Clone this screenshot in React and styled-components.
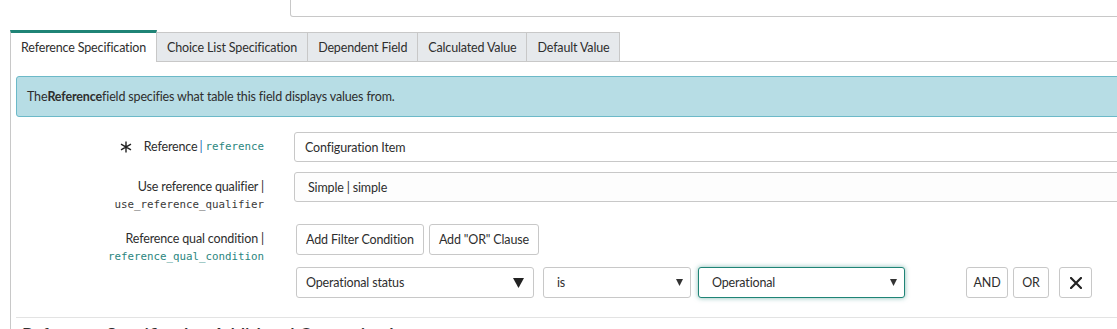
import React from 'react';
import styled, { createGlobalStyle } from 'styled-components';

const GlobalStyle = createGlobalStyle`
  html, body { margin: 0; padding: 0; background: #fff; overflow: hidden; }
  body {
    font-family: Lato, "Open Sans", "Liberation Sans", sans-serif;
    font-size: 12.5px;
    letter-spacing: -0.15px;
    color: #2e2e2e;
  }
  * { box-sizing: border-box; }
`;

const Page = styled.div`
  width: 1140px;
  height: 329px;
  overflow: hidden;
`;

const TopField = styled.div`
  margin-left: 290px;
  height: 17px;
  border: 1px solid #c8c8c8;
  border-top: none;
  border-radius: 0 0 0 3px;
`;

const TabStrip = styled.div`
  display: flex;
  align-items: flex-end;
  margin: 13px 0 0 10px;
  height: 32px;
  border-bottom: 1px solid #c8c8c8;
`;

const Tab = styled.div`
  height: ${p => (p.$active ? 32 : 29)}px;
  margin-bottom: ${p => (p.$active ? -1 : 0)}px;
  padding: 0 ${p => p.$pad}px;
  display: flex;
  align-items: center;
  background: ${p => (p.$active ? '#fff' : '#e6e9ec')};
  border-top: ${p => (p.$active ? '3px solid #1f8476' : '1px solid #c8c8c8')};
  border-left: ${p => (p.$active ? '1px solid #c8c8c8' : 'none')};
  border-right: 1px solid #c8c8c8;
  white-space: nowrap;
  color: #2e2e2e;
`;

const Panel = styled.div`
  margin-left: 10px;
  border-left: 1px solid #c8c8c8;
  padding: 14px 0 0 5px;
  height: 300px;
`;

const InfoBox = styled.div`
  height: 41px;
  border: 1px solid #6cb9c8;
  background: #b7dde5;
  border-radius: 3px;
  padding: 0 10px;
  display: flex;
  align-items: center;
`;

const Strong = styled.span`
  font-weight: 700;
`;

const Form = styled.div`
  margin-top: 15px;
  display: flex;
  flex-direction: column;
  gap: 10px;
`;

const Row = styled.div`
  display: grid;
  grid-template-columns: 248px 1fr;
  column-gap: 30px;
`;

const Label = styled.div`
  text-align: right;
  padding-top: 6px;
  color: #2e2e2e;
`;

const LabelLine = styled.div`
  height: 18px;
  line-height: 18px;
  white-space: nowrap;
  display: flex;
  justify-content: flex-end;
  align-items: center;
`;

const Star = styled.svg`
  margin-right: 12px;
  flex: none;
`;

const Pipe = styled.span`
  color: ${p => p.$color || 'inherit'};
  margin: 0 3px 0 2px;
`;

const Mono = styled.span`
  font-family: "DejaVu Sans Mono", "Liberation Mono", monospace;
  font-size: 10.8px;
  letter-spacing: 0;
  color: ${p => (p.$teal ? '#2b8680' : '#3a3a3a')};
`;

const Input = styled.div`
  height: 30px;
  border: 1px solid #c8c8c8;
  border-radius: 3px;
  padding: 0 ${p => p.$pad}px;
  display: flex;
  align-items: center;
  background: ${p => p.$bg || '#fff'};
  white-space: nowrap;
`;

const Controls = styled.div`
  display: flex;
  flex-direction: column;
  gap: 12px;
  padding-left: 2px;
`;

const ButtonRow = styled.div`
  display: flex;
  gap: 5px;
`;

const Button = styled.button`
  height: 31px;
  ${p => (p.$w ? `width: ${p.$w}px; padding: 0;` : 'padding: 0 9px;')}
  margin-left: ${p => p.$ml || 0}px;
  border: 1px solid #c8c8c8;
  border-radius: 3px;
  background: #fff;
  font-family: inherit;
  font-size: inherit;
  letter-spacing: inherit;
  color: #2e2e2e;
  display: flex;
  align-items: center;
  justify-content: center;
  white-space: nowrap;
  flex: none;
`;

const CondRow = styled.div`
  display: flex;
  align-items: center;
  height: 31px;
`;

const Select = styled.div`
  width: ${p => p.$w}px;
  margin-left: ${p => p.$ml || 0}px;
  height: 31px;
  border: 1px solid ${p => (p.$focus ? '#1f8476' : '#c8c8c8')};
  box-shadow: ${p => (p.$focus ? '0 0 5px rgba(31,132,118,0.55)' : 'none')};
  border-radius: 3px;
  padding: 0 ${p => p.$pr}px 0 ${p => p.$pl}px;
  display: flex;
  align-items: center;
  justify-content: space-between;
  background: #fff;
  flex: none;
`;

const Separator = styled.div`
  margin-top: 19px;
  height: 1px;
  background: #e3e3e3;
`;

const Heading = styled.div`
  padding: 5px 0 0 6px;
  font-size: 18px;
  line-height: 22px;
  font-weight: 600;
  letter-spacing: 0;
  color: #2e2e2e;
  white-space: nowrap;
`;

const AsteriskIcon = () => (
  <Star width="12" height="12" viewBox="0 0 12 12">
    <path d="M6 0.5 V11.5 M1 3.2 L11 8.8 M11 3.2 L1 8.8" stroke="#222" strokeWidth="1.4" />
  </Star>
);

const BigArrow = () => (
  <svg width="11" height="10" viewBox="0 0 11 10">
    <polygon points="0,0 11,0 5.5,10" fill="#222" />
  </svg>
);

const SmallArrow = () => (
  <svg width="7" height="7" viewBox="0 0 7 7">
    <polygon points="0,0 7,0 3.5,7" fill="#333" />
  </svg>
);

const CloseIcon = () => (
  <svg width="12" height="12" viewBox="0 0 12 12">
    <path d="M1 1 L11 11 M11 1 L1 11" stroke="#222" strokeWidth="2.2" strokeLinecap="square" />
  </svg>
);

export default function App() {
  return (
    <Page>
      <GlobalStyle />
      <TopField />
      <TabStrip>
        <Tab $active $pad={10}>Reference Specification</Tab>
        <Tab $pad={10}>Choice List Specification</Tab>
        <Tab $pad={10}>Dependent Field</Tab>
        <Tab $pad={10}>Calculated Value</Tab>
        <Tab $pad={10}>Default Value</Tab>
      </TabStrip>
      <Panel>
        <InfoBox>
          <span>The<Strong>Reference</Strong>field specifies what table this field displays values from.</span>
        </InfoBox>
        <Form>
          <Row>
            <Label>
              <LabelLine>
                <AsteriskIcon />Reference<Pipe $color="#1f6fb5">|</Pipe><Mono $teal>reference</Mono>
              </LabelLine>
            </Label>
            <Input $pad={10}>Configuration Item</Input>
          </Row>
          <Row>
            <Label>
              <LabelLine>Use reference qualifier |</LabelLine>
              <LabelLine><Mono>use_reference_qualifier</Mono></LabelLine>
            </Label>
            <Input $pad={13} $bg="#fdfdfd">Simple | simple</Input>
          </Row>
          <Row>
            <Label>
              <LabelLine>Reference qual condition |</LabelLine>
              <LabelLine><Mono $teal>reference_qual_condition</Mono></LabelLine>
            </Label>
            <Controls>
              <ButtonRow>
                <Button>Add Filter Condition</Button>
                <Button>Add "OR" Clause</Button>
              </ButtonRow>
              <CondRow>
                <Select $w={238} $pl={9} $pr={9}>
                  <span>Operational status</span>
                  <BigArrow />
                </Select>
                <Select $w={148} $ml={9} $pl={13} $pr={7}>
                  <span>is</span>
                  <SmallArrow />
                </Select>
                <Select $w={207} $ml={7} $pl={13} $pr={7} $focus>
                  <span>Operational</span>
                  <SmallArrow />
                </Select>
                <Button $ml={61} $w={42}>AND</Button>
                <Button $ml={5} $w={36}>OR</Button>
                <Button $ml={10} $w={33}><CloseIcon /></Button>
              </CondRow>
            </Controls>
          </Row>
        </Form>
        <Separator />
        <Heading>Reference Specification Additional Customization</Heading>
      </Panel>
    </Page>
  );
}
